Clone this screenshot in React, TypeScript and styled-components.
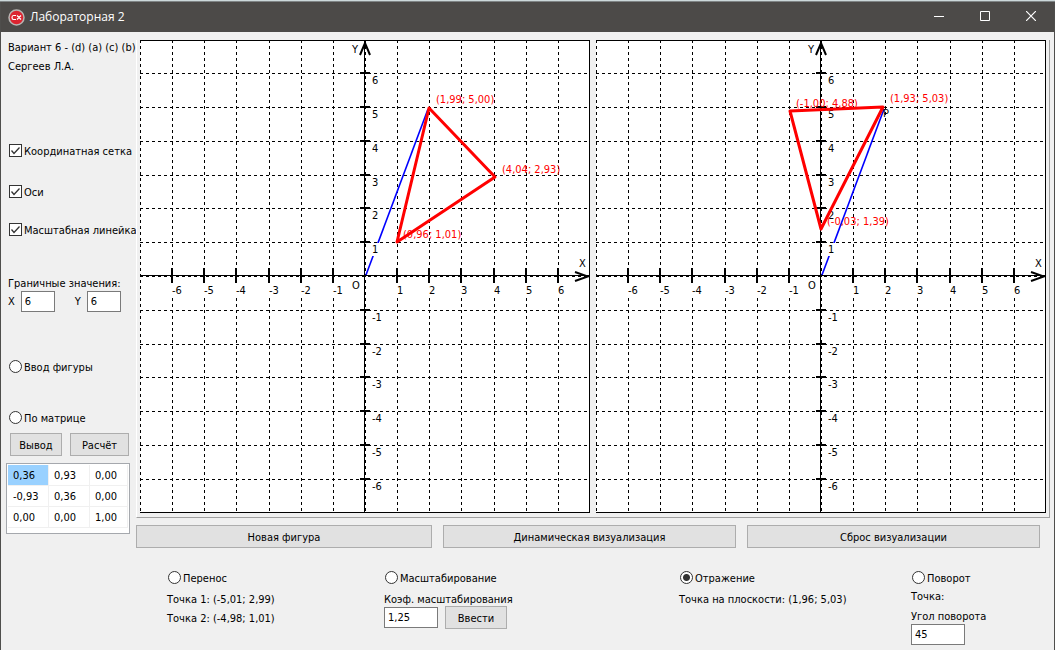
import React from 'react';
import styled, { createGlobalStyle } from 'styled-components';

const Global = createGlobalStyle`
  * { box-sizing: border-box; }
  body { margin: 0; background: #f0f0f0; color: #000; font: 11px/13px "DejaVu Sans Condensed", "DejaVu Sans", sans-serif; }
  button, input { font: inherit; color: inherit; margin: 0; }
`;

const Window = styled.div`
  min-height: 100vh;
  display: flex;
  flex-direction: column;
  border: solid #4f4e4c;
  border-width: 0 1px;
`;

const Behind = styled.div`
  height: 2px;
  margin: 0 -1px;
  background: #ccd8da;
  border-bottom: 1px solid #7f8485;
`;

const TitleBar = styled.header`
  display: flex;
  align-items: center;
  height: 30px;
  padding-left: 7px;
  background: #4c4a48;
  color: #fff;
  font: 12px/16px "Open Sans", sans-serif;
`;

const Title = styled.h1`
  flex: 1;
  margin: 0 0 0 5px;
  font: inherit;
`;

const CaptionButton = styled.button`
  width: 46px;
  height: 30px;
  padding: 0 0 2px;
  border: 0;
  background: none;
  color: #fff;
  display: grid;
  place-items: center;
`;

const Body = styled.div`
  display: flex;
  padding: 8px 4px 0 0;
`;

const Sidebar = styled.aside`
  width: 135px;
  flex: none;
  padding-left: 7px;
  white-space: nowrap;
`;

const Line = styled.p<{ $gap?: number }>`
  display: block;
  margin: ${p => p.$gap || 0}px 0 0;
  white-space: nowrap;
`;

const Option = styled.label<{ $gap?: number }>`
  display: flex;
  align-items: center;
  gap: 2px;
  height: 13px;
  width: max-content;
  margin: ${p => p.$gap || 0}px 0 0 1px;
  white-space: nowrap;
`;

const OptionText = styled.span`
  padding-top: 2px;
`;

const Check = styled.input`
  appearance: none;
  width: 13px;
  height: 13px;
  border: 1px solid #333;
  background: #fff;
  &:not(:checked) + svg { display: none; }
`;

const CheckWrap = styled.span`
  display: grid;
  width: 13px;
  height: 13px;
  > * { grid-area: 1 / 1; }
  svg { pointer-events: none; }
`;

const Radio = styled.input`
  appearance: none;
  flex: none;
  width: 13px;
  height: 13px;
  border: 1px solid #333;
  border-radius: 50%;
  background: #fff;
  &:checked { background: radial-gradient(circle, #333 0 3px, #fff 4px); }
`;

const Field = styled.input<{ $w: number }>`
  width: ${p => p.$w}px;
  height: 21px;
  padding: 0 3px;
  border: 1px solid #7a7a7a;
  background: #fff;
`;

const Row = styled.div<{ $gap: number; $top?: number; $inset?: number }>`
  display: flex;
  align-items: center;
  gap: ${p => p.$gap}px;
  margin-top: ${p => p.$top || 0}px;
  padding-left: ${p => p.$inset || 0}px;
`;

const Limit = styled.label`
  display: flex;
  align-items: center;
  gap: 6px;
`;

const Button = styled.button<{ $w?: number }>`
  width: ${p => (p.$w ? p.$w + 'px' : '100%')};
  height: 23px;
  padding: 2px 0 0;
  border: 1px solid #adadad;
  background: #e1e1e1;
`;

const MatrixFrame = styled.div`
  width: 124px;
  height: 71px;
  margin: 7px 0 0 -2px;
  padding: 1px;
  border: 1px solid #a5a8ad;
  background: #fff;
`;

const Matrix = styled.table`
  border-spacing: 0;
  table-layout: fixed;
  width: 100%;
`;

const Cell = styled.td<{ $on: boolean }>`
  width: 41px;
  &:last-child { width: auto; }
  height: 21px;
  padding: 0 0 0 5px;
  border: solid #f0f0f0;
  border-width: 0 1px 1px 0;
  background: ${p => (p.$on ? '#99d1ff' : '#fff')};
`;

const Main = styled.main`
  flex: 1;
  min-width: 0;
`;

const Plots = styled.section`
  display: flex;
  gap: 6px;
  padding: 0 3px 4px;
  border: solid #a0a0a0;
  border-width: 0 1px 1px;
  border-left-color: #fff;
`;

const PlotSvg = styled.svg`
  display: block;
  flex: 1;
  min-width: 0;
  background: #fff;
  font: 11px "DejaVu Sans Condensed", "DejaVu Sans", sans-serif;
`;

const Actions = styled.div`
  display: grid;
  grid-template-columns: 296fr 293fr 293fr;
  column-gap: 11px;
  padding: 7px 10px 0 0;
`;

const Modes = styled.div`
  display: grid;
  grid-template-columns: 217fr 295fr 232fr 139fr;
  padding: 23px 0 4px 31px;
`;

const Mode = styled.section`
  min-width: 0;
`;

const xs = [0, 32, 64, 96, 129, 161, 193, 225, 257, 289, 321, 354, 386, 418];
const ys = [33, 67, 101, 135, 168, 202, 236, 270, 304, 337, 371, 405, 439];

type Vertex = { x: number; y: number; label: string; lx: number; ly: number };

function Plot({ name, vertices, blue, point }: { name: string; vertices: Vertex[]; blue: [number, number]; point?: boolean }) {
  const [bx, by] = blue;
  return (
    <PlotSvg viewBox="0 0 450 473" role="img" aria-label={name}>
      <g stroke="#000" strokeDasharray="3 3" shapeRendering="crispEdges">
        {xs.map(x => <path key={x} d={`M${x + 0.5} 0V473`} />)}
        {ys.map(y => <path key={y} d={`M0 ${y + 0.5}H450`} />)}
      </g>
      <path d="M0 .5H449.5V472.5H0" fill="none" stroke="#000" shapeRendering="crispEdges" />
      <path d={`M226 235L${bx} ${by}`} stroke="#00f" strokeWidth="1.600" />
      <g stroke="#000" shapeRendering="crispEdges">
        <path d="M224.5 0V473M0 235.5H450" />
        <g strokeWidth="2">
          {xs.slice(1).filter(x => x !== 225).map(x => <path key={x} d={`M${x} 228V243`} />)}
          {ys.filter(y => y !== 236).map(y => <path key={y} d={`M220 ${y}H230`} />)}
        </g>
      </g>
      <path d="M220 15L225 3L230 15M435 232L448 236.500L435 241" fill="none" stroke="#000" strokeWidth="2" />
      {xs.slice(1).map((x, i) => i !== 6 && (
        <g key={x}>
          <rect x={x} y="244" width={i < 6 ? 11 : 8} height="13" fill="#fff" />
          <text x={x} y="254">{i - 6}</text>
        </g>
      ))}
      {ys.map((y, i) => i !== 6 && (
        <g key={y}>
          <rect x="232" y={y + 1} width={i < 6 ? 8 : 11} height="13" fill="#fff" />
          <text x="232" y={y + 11}>{6 - i}</text>
        </g>
      ))}
      <text x="212" y="13">Y</text>
      <text x="439" y="227">X</text>
      <text x="212" y="249">O</text>
      {point && <text x="287" y="77">P</text>}
      <polygon points={vertices.map(v => `${v.x},${v.y}`).join(' ')} fill="none" stroke="#f00" strokeWidth="3" strokeLinejoin="round" />
      {vertices.map(v => <text key={v.label} x={v.lx} y={v.ly} fill="#f00">{v.label}</text>)}
    </PlotSvg>
  );
}

const left: Vertex[] = [
  { x: 289, y: 68, label: '(1,99; 5,00)', lx: 296, ly: 63 },
  { x: 355, y: 137, label: '(4,04; 2,93)', lx: 362, ly: 133 },
  { x: 257, y: 202, label: '(0,96; 1,01)', lx: 263, ly: 198 },
];
const right: Vertex[] = [
  { x: 287, y: 67, label: '(1,93; 5,03)', lx: 294, ly: 62 },
  { x: 194, y: 71, label: '(-1,00; 4,88)', lx: 200, ly: 67 },
  { x: 225, y: 189, label: '(-0,03; 1,39)', lx: 231, ly: 185 },
];

function CheckOption({ text, gap }: { text: string; gap: number }) {
  return (
    <Option $gap={gap}>
      <CheckWrap>
        <Check type="checkbox" defaultChecked />
        <svg width="13" height="13"><path d="M2.500 6.500L5 9.500L10.500 3.500" fill="none" stroke="#333" strokeWidth="1.300" /></svg>
      </CheckWrap>
      <OptionText>{text}</OptionText>
    </Option>
  );
}

function RadioOption({ text, gap, group, checked }: { text: string; gap?: number; group: string; checked?: boolean }) {
  return (
    <Option $gap={gap}>
      <Radio type="radio" name={group} defaultChecked={checked} />
      <OptionText>{text}</OptionText>
    </Option>
  );
}

const matrix = [['0,36', '0,93', '0,00'], ['-0,93', '0,36', '0,00'], ['0,00', '0,00', '1,00']];

export default function App() {
  return (
    <>
      <Global />
      <Window>
        <Behind />
        <TitleBar>
          <svg width="17" height="17" viewBox="0 0 17 17">
            <circle cx="8.500" cy="8.500" r="7.500" fill="#dc2430" stroke="#b9b5b3" strokeWidth="1.500" />
            <path d="M8 6.500H5.500Q4 6.500 4 8.500T5.500 10.500H8M9 6.500L13 10.500M13 6.500L9 10.500" fill="none" stroke="#fff" strokeWidth="1.200" />
          </svg>
          <Title>Лабораторная 2</Title>
          <CaptionButton aria-label="Свернуть"><svg width="10" height="10"><path d="M0 5.500H10" stroke="currentColor" /></svg></CaptionButton>
          <CaptionButton aria-label="Развернуть"><svg width="10" height="10"><path d="M.5 .5H9.500V9.500H.5Z" fill="none" stroke="currentColor" /></svg></CaptionButton>
          <CaptionButton aria-label="Закрыть"><svg width="10" height="10"><path d="M0 0L10 10M10 0L0 10" stroke="currentColor" strokeWidth="1.200" /></svg></CaptionButton>
        </TitleBar>
        <Body>
          <Sidebar>
            <Line $gap={1}>Вариант 6 - (d) (a) (c) (b)</Line>
            <Line $gap={6}>Сергеев Л.А.</Line>
            <CheckOption text="Координатная сетка" gap={71} />
            <CheckOption text="Оси" gap={28} />
            <CheckOption text="Масштабная линейка" gap={25} />
            <Line $gap={41}>Граничные значения:</Line>
            <Row $gap={20} $top={1}>
              <Limit>X<Field $w={34} defaultValue="6" /></Limit>
              <Limit>Y<Field $w={34} defaultValue="6" /></Limit>
            </Row>
            <RadioOption text="Ввод фигуры" gap={48} group="input" />
            <RadioOption text="По матрице" gap={38} group="input" />
            <Row $gap={8} $top={9} $inset={2}>
              <Button $w={52}>Вывод</Button>
              <Button $w={59}>Расчёт</Button>
            </Row>
            <MatrixFrame>
              <Matrix>
                <tbody>
                  {matrix.map((row, r) => (
                    <tr key={r}>{row.map((v, c) => <Cell key={c} $on={r === 0 && c === 0}>{v}</Cell>)}</tr>
                  ))}
                </tbody>
              </Matrix>
            </MatrixFrame>
          </Sidebar>
          <Main>
            <Plots>
              <Plot name="Исходная фигура" vertices={left} blue={[288, 69]} />
              <Plot name="Результат" vertices={right} blue={[288, 69]} point />
            </Plots>
            <Actions>
              <Button>Новая фигура</Button>
              <Button>Динамическая визуализация</Button>
              <Button>Сброс визуализации</Button>
            </Actions>
            <Modes>
              <Mode>
                <RadioOption text="Перенос" group="mode" />
                <Line $gap={9}>Точка 1: (-5,01; 2,99)</Line>
                <Line $gap={6}>Точка 2: (-4,98; 1,01)</Line>
              </Mode>
              <Mode>
                <RadioOption text="Масштабирование" group="mode" />
                <Line $gap={9} as="label" htmlFor="scale">Коэф. масштабирования</Line>
                <Row $gap={7}>
                  <Field id="scale" $w={54} defaultValue="1,25" />
                  <Button $w={62}>Ввести</Button>
                </Row>
              </Mode>
              <Mode>
                <RadioOption text="Отражение" group="mode" checked />
                <Line $gap={9}>Точка на плоскости: (1,96; 5,03)</Line>
              </Mode>
              <Mode>
                <RadioOption text="Поворот" group="mode" />
                <Line $gap={6}>Точка:</Line>
                <Line $gap={7} as="label" htmlFor="angle">Угол поворота</Line>
                <Row $gap={7} $top={1}><Field id="angle" $w={54} defaultValue="45" /></Row>
              </Mode>
            </Modes>
          </Main>
        </Body>
      </Window>
    </>
  );
}
